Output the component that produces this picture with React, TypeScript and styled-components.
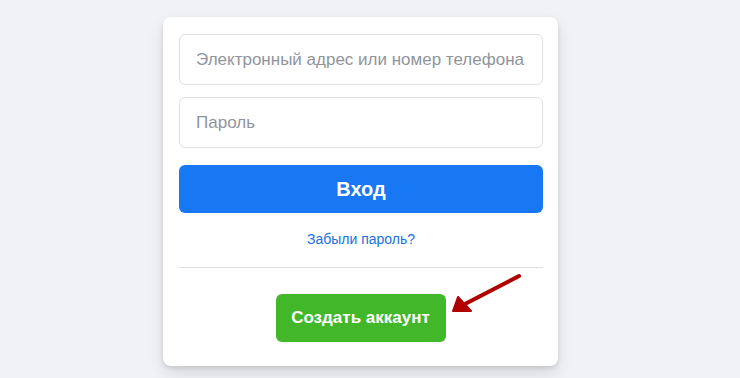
import React from 'react';
import styled, { createGlobalStyle } from 'styled-components';

const GlobalStyle = createGlobalStyle`
  html, body {
    margin: 0;
    padding: 0;
    background: #f0f2f5;
    font-family: "Liberation Sans", Arial, Helvetica, sans-serif;
  }
`;

const Page = styled.div`
  width: 740px;
  height: 378px;
  overflow: hidden;
  padding: 17px 0 0 163px;
  box-sizing: border-box;
`;

const Card = styled.form`
  position: relative;
  width: 395px;
  box-sizing: border-box;
  background: #fff;
  border-radius: 8px;
  box-shadow: 0 2px 4px rgba(0, 0, 0, 0.1), 0 8px 16px rgba(0, 0, 0, 0.1);
  padding: 17px 15px 24px 16px;
  display: flex;
  flex-direction: column;
`;

const Input = styled.input`
  height: 51px;
  box-sizing: border-box;
  border: 1px solid #dddfe2;
  border-radius: 6px;
  padding: 14px 16px;
  font-family: inherit;
  font-size: 17px;
  color: #1c1e21;
  outline: none;
  margin-bottom: ${({ $last }: { $last?: boolean }) => ($last ? '17px' : '12px')};

  &::placeholder {
    color: #90949c;
  }
`;

const LoginButton = styled.button`
  height: 48px;
  border: none;
  border-radius: 6px;
  background: #1877f2;
  color: #fff;
  font-family: inherit;
  font-size: 20px;
  font-weight: bold;
  cursor: pointer;
`;

const Forgot = styled.a`
  display: block;
  margin: 18px auto 0;
  font-size: 14px;
  line-height: 16px;
  color: #216fdb;
  text-decoration: none;
`;

const Divider = styled.div`
  height: 1px;
  background: #dadde1;
  margin: 20px 0 26px;
`;

const CreateButton = styled.button`
  align-self: center;
  width: 170px;
  height: 48px;
  margin-right: 1px;
  border: none;
  border-radius: 6px;
  background: #42b72a;
  color: #fff;
  font-family: inherit;
  font-size: 17px;
  font-weight: bold;
  cursor: pointer;
`;

const Arrow = styled.svg`
  position: absolute;
  left: 286px;
  top: 255px;
  width: 75px;
  height: 46px;
  overflow: visible;
`;

export default function App() {
  return (
    <>
      <GlobalStyle />
      <Page>
        <Card onSubmit={(e) => e.preventDefault()}>
          <Input type="text" placeholder="Электронный адрес или номер телефона" />
          <Input type="password" placeholder="Пароль" $last />
          <LoginButton type="submit">Вход</LoginButton>
          <Forgot href="#">Забыли пароль?</Forgot>
          <Divider />
          <CreateButton type="button">Создать аккаунт</CreateButton>
          <Arrow viewBox="0 0 75 46">
            <line x1="70" y1="4" x2="14" y2="33" stroke="#b00000" strokeWidth="4" strokeLinecap="round" />
            <polygon points="4,39 9,25 22,39" fill="#b00000" stroke="#b00000" strokeWidth="2" strokeLinejoin="round" />
          </Arrow>
        </Card>
      </Page>
    </>
  );
}
